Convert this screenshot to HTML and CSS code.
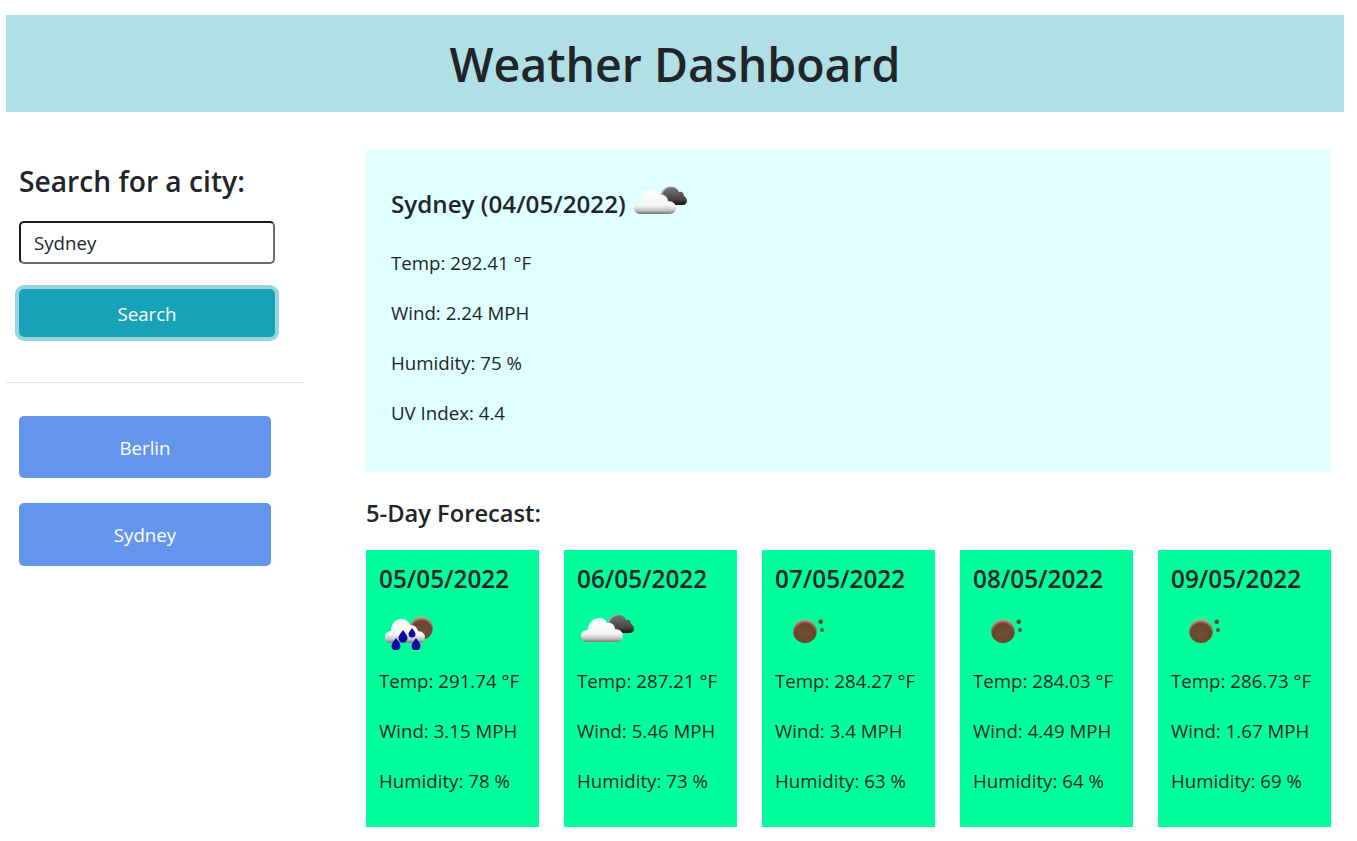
FILE: index.html
```html
<!DOCTYPE html>
<html lang="en">
<head>
    <meta charset="UTF-8">
    <title>Weather Dashboard</title>
    <link rel="stylesheet" href="styles.css">
</head>
<body>
<svg class="defs" width="0" height="0">
    <defs>
        <linearGradient id="whiteCloud" x1="0" y1="0" x2="0" y2="1">
            <stop offset="0" stop-color="#ffffff"/>
            <stop offset="0.65" stop-color="#f4f4f4"/>
            <stop offset="0.85" stop-color="#c4c4c4"/>
            <stop offset="1" stop-color="#777777"/>
        </linearGradient>
        <linearGradient id="darkCloud" x1="0" y1="0" x2="0" y2="1">
            <stop offset="0" stop-color="#777777"/>
            <stop offset="0.7" stop-color="#444444"/>
            <stop offset="1" stop-color="#111111"/>
        </linearGradient>
        <radialGradient id="moon" cx="0.5" cy="0.62" r="0.6">
            <stop offset="0" stop-color="#744e36"/>
            <stop offset="0.72" stop-color="#6a4630"/>
            <stop offset="1" stop-color="#c3ae9c"/>
        </radialGradient>
        <symbol id="clouds" viewBox="0 0 56 40">
            <path fill="url(#darkCloud)" d="M27 23c-1-3 0-6 3-8 0-5 3-10 9-10 4 0 7 2 8 5 3-1 5 1 5 4 2 1 3 3 3 5s-2 4-4 4z"/>
            <path fill="none" stroke="#a0a0a0" stroke-width="1.5" d="M29 14c1-5 5-9 10-9"/>
            <path fill="url(#whiteCloud)" d="M9 32c-4 0-7-2-7-6s3-6 7-6c0-7 5-12 11-12 4 0 7 2 8 5 4-1 8 2 8 6 5 0 8 3 8 7 0 3-3 6-6 6z"/>
        </symbol>
        <symbol id="ball" viewBox="0 0 56 40">
            <circle cx="28" cy="21" r="12" fill="url(#moon)"/>
            <circle cx="43.7" cy="11.7" r="2.3" fill="#6a4630"/>
            <circle cx="45" cy="20" r="1.9" fill="#6a4630"/>
        </symbol>
    </defs>
</svg>

<header class="title-bar">
    <h1>Weather Dashboard</h1>
</header>

<div class="main">
    <aside class="sidebar">
        <div class="search">
            <h2>Search for a city:</h2>
            <input class="city-input" type="text" value="Sydney">
            <button class="search-btn">Search</button>
        </div>
        <hr class="divider">
        <div class="history">
            <button class="city-btn">Berlin</button>
            <button class="city-btn">Sydney</button>
        </div>
    </aside>

    <section class="content">
        <div class="today">
            <h3>Sydney (04/05/2022)
                <svg class="icon-big"><use href="#clouds"/></svg>
            </h3>
            <p>Temp: 292.41 °F</p>
            <p>Wind: 2.24 MPH</p>
            <p>Humidity: 75 %</p>
            <p>UV Index: 4.4</p>
        </div>

        <h4 class="forecast-title">5-Day Forecast:</h4>
        <div class="forecast">
            <div class="day">
                <h5>05/05/2022</h5>
                <svg class="icon-small" viewBox="0 0 56 40">
                    <circle cx="40.5" cy="18" r="11.5" fill="url(#moon)"/>
                    <path fill="url(#whiteCloud)" d="M10 33c-4 0-6-2-6-6s3-6 6-6c0-7 4-12 10-12 5 0 8 3 9 6 4 0 7 2 8 6 4 0 7 3 7 6s-2 6-5 6z"/>
                    <path fill="#0a0aa0" d="M22 20c3 4 4.500 6 4.500 8a4.500 4.500 0 0 1-9 0c0-2 1.500-4 4.500-8zM31 18c2 3 3.500 4 3.500 6a3.500 3.500 0 0 1-7 0c0-2 1.500-3 3.500-6zM15 28c3 4 4.500 6 4.500 8a4.500 4.500 0 0 1-9 0c0-2 1.500-4 4.500-8zM35 28c3 4 4.500 6 4.500 8a4.500 4.500 0 0 1-9 0c0-2 1.500-4 4.500-8z"/>
                </svg>
                <p>Temp: 291.74 °F</p>
                <p>Wind: 3.15 MPH</p>
                <p>Humidity: 78 %</p>
            </div>
            <div class="day">
                <h5>06/05/2022</h5>
                <svg class="icon-small"><use href="#clouds"/></svg>
                <p>Temp: 287.21 °F</p>
                <p>Wind: 5.46 MPH</p>
                <p>Humidity: 73 %</p>
            </div>
            <div class="day">
                <h5>07/05/2022</h5>
                <svg class="icon-small"><use href="#ball"/></svg>
                <p>Temp: 284.27 °F</p>
                <p>Wind: 3.4 MPH</p>
                <p>Humidity: 63 %</p>
            </div>
            <div class="day">
                <h5>08/05/2022</h5>
                <svg class="icon-small"><use href="#ball"/></svg>
                <p>Temp: 284.03 °F</p>
                <p>Wind: 4.49 MPH</p>
                <p>Humidity: 64 %</p>
            </div>
            <div class="day">
                <h5>09/05/2022</h5>
                <svg class="icon-small"><use href="#ball"/></svg>
                <p>Temp: 286.73 °F</p>
                <p>Wind: 1.67 MPH</p>
                <p>Humidity: 69 %</p>
            </div>
        </div>
    </section>
</div>
</body>
</html>
```

FILE: styles.css
```css
body {
    margin: 0;
    padding: 15px 13px 0 6px;
    font-family: "Open Sans", "Noto Sans", sans-serif;
    font-size: 18.7px;
    color: #212529;
    background: #fff;
}
.defs {
    position: absolute;
}
.title-bar {
    background: #b0e0e6;
    height: 97px;
    display: flex;
    align-items: center;
    justify-content: center;
}
.title-bar h1 {
    margin: 0;
    font-size: 46.5px;
    font-weight: 600;
}
.main {
    display: flex;
    margin-top: 38px;
}
.sidebar {
    width: 297px;
    flex-shrink: 0;
}
.search {
    padding: 13px 13px 0;
}
.search h2 {
    margin: 0 0 21px;
    font-size: 28.2px;
    line-height: 37px;
    font-weight: 600;
}
.city-input {
    display: block;
    box-sizing: border-box;
    width: 256px;
    height: 43px;
    padding: 0 13px;
    border: 2px solid;
    border-color: #1d1d1d #6b6b6b #6b6b6b #1d1d1d;
    border-radius: 5px;
    font: inherit;
    color: #212529;
}
.search-btn {
    display: block;
    box-sizing: border-box;
    width: 256px;
    height: 48px;
    margin-top: 25px;
    border: 0;
    border-radius: 5px;
    background: #17a2b8;
    box-shadow: 0 0 0 4px #99d5df;
    color: #fff;
    font: inherit;
}
.divider {
    margin: 45px 0 33px;
    border: 0;
    border-top: 1px solid #e3e3e3;
}
.history {
    display: flex;
    flex-direction: column;
    gap: 25px;
    padding: 0 13px;
}
.city-btn {
    width: 252px;
    height: 62.4px;
    border: 0;
    border-radius: 5px;
    background: #6495ed;
    color: #fff;
    font: inherit;
}
.content {
    width: 965px;
    margin-left: 63px;
}
.today {
    background: #e0ffff;
    height: 322px;
    box-sizing: border-box;
    padding: 28px 25px 0;
}
.today h3 {
    display: flex;
    align-items: center;
    gap: 6px;
    margin: 0 0 22px;
    height: 50px;
    font-size: 24.2px;
    font-weight: 600;
}
.icon-big {
    width: 56px;
    height: 40px;
    margin-top: -2px;
}
.today p,
.day p {
    margin: 0 0 25px;
    line-height: 25px;
}
.forecast-title {
    margin: 24px 0 20px;
    font-size: 23.7px;
    line-height: 34px;
    font-weight: 600;
}
.forecast {
    display: flex;
    justify-content: space-between;
}
.day {
    width: 173px;
    height: 277px;
    box-sizing: border-box;
    padding: 12px 13px 0;
    background: #00ff9c;
}
.day h5 {
    margin: 0;
    font-size: 24.3px;
    line-height: 33px;
    font-weight: 600;
}
.icon-small {
    display: block;
    width: 56px;
    height: 40px;
    margin: 15px 0 18px 2px;
}
.icon-big,
.icon-small {
    filter: blur(0.4px);
}
```
